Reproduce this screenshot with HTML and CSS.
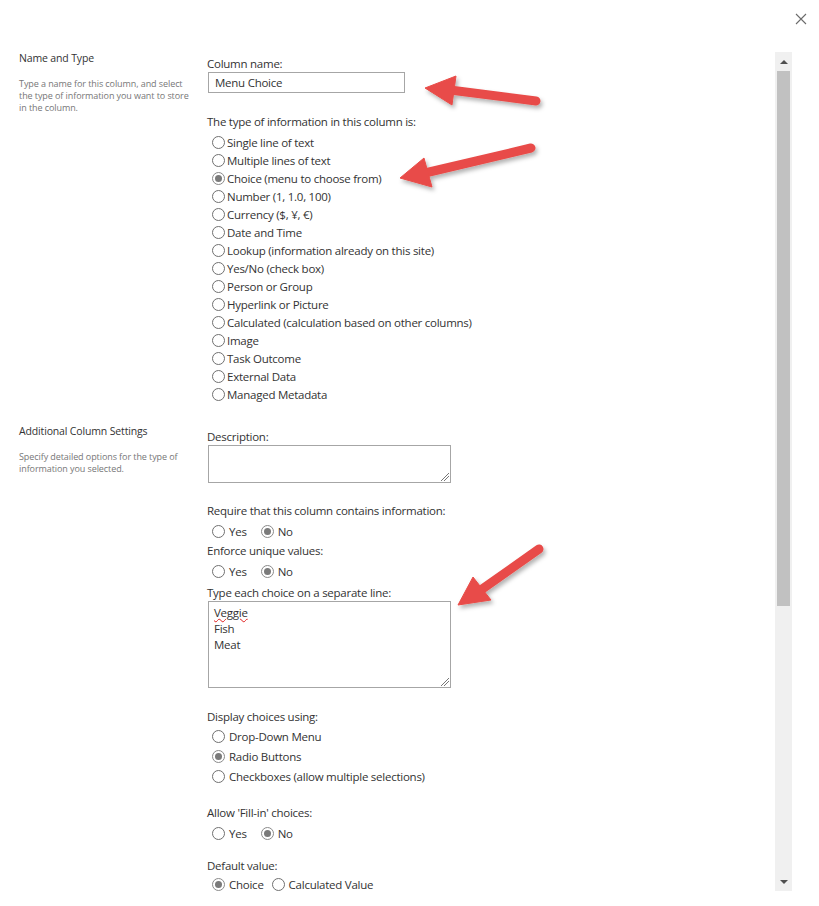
FILE: index.html
```html
<!DOCTYPE html>
<html>
<head>
<meta charset="utf-8">
<link rel="stylesheet" href="styles.css">
</head>
<body>
<div class="dialog">
  <div class="content">
    <section class="sect sect-name">
      <div class="side">
        <div class="side-title">Name and Type</div>
        <div class="side-desc">Type a name for this column, and select<br>the type of information you want to store<br>in the column.</div>
      </div>
      <div class="main">
        <div class="label">Column name:</div>
        <div class="textbox">Menu Choice</div>
        <div class="label label-type">The type of information in this column is:</div>
        <ul class="typelist">
          <li class="opt"><span class="radio"></span>Single line of text</li>
          <li class="opt"><span class="radio"></span>Multiple lines of text</li>
          <li class="opt"><span class="radio on"></span>Choice (menu to choose from)</li>
          <li class="opt"><span class="radio"></span>Number (1, 1.0, 100)</li>
          <li class="opt"><span class="radio"></span>Currency ($, ¥, €)</li>
          <li class="opt"><span class="radio"></span>Date and Time</li>
          <li class="opt"><span class="radio"></span>Lookup (information already on this site)</li>
          <li class="opt"><span class="radio"></span>Yes/No (check box)</li>
          <li class="opt"><span class="radio"></span>Person or Group</li>
          <li class="opt"><span class="radio"></span>Hyperlink or Picture</li>
          <li class="opt"><span class="radio"></span>Calculated (calculation based on other columns)</li>
          <li class="opt"><span class="radio"></span>Image</li>
          <li class="opt"><span class="radio"></span>Task Outcome</li>
          <li class="opt"><span class="radio"></span>External Data</li>
          <li class="opt"><span class="radio"></span>Managed Metadata</li>
        </ul>
      </div>
    </section>
    <section class="sect sect-extra">
      <div class="side">
        <div class="side-title">Additional Column Settings</div>
        <div class="side-desc">Specify detailed options for the type of<br>information you selected.</div>
      </div>
      <div class="main">
        <div class="label">Description:</div>
        <div class="textarea ta-desc"><span class="grip"></span></div>
        <div class="label label-req">Require that this column contains information:</div>
        <div class="pair"><span class="opt2"><span class="radio"></span>Yes</span><span class="opt2"><span class="radio on"></span>No</span></div>
        <div class="label label-uniq">Enforce unique values:</div>
        <div class="pair"><span class="opt2"><span class="radio"></span>Yes</span><span class="opt2"><span class="radio on"></span>No</span></div>
        <div class="label label-choices">Type each choice on a separate line:</div>
        <div class="textarea ta-choices">
          <div class="line"><span class="spell">Veggie</span></div>
          <div class="line">Fish</div>
          <div class="line">Meat</div>
          <span class="grip"></span>
        </div>
        <div class="label label-display">Display choices using:</div>
        <ul class="displist">
          <li class="opt2"><span class="radio"></span>Drop-Down Menu</li>
          <li class="opt2"><span class="radio on"></span>Radio Buttons</li>
          <li class="opt2"><span class="radio"></span>Checkboxes (allow multiple selections)</li>
        </ul>
        <div class="label label-fill">Allow 'Fill-in' choices:</div>
        <div class="pair"><span class="opt2"><span class="radio"></span>Yes</span><span class="opt2"><span class="radio on"></span>No</span></div>
        <div class="label label-default">Default value:</div>
        <div class="pair pair-tight"><span class="opt2"><span class="radio on"></span>Choice</span><span class="opt2"><span class="radio"></span>Calculated Value</span></div>
      </div>
    </section>
  </div>
  <div class="scrollbar">
    <div class="sb-btn"><span class="tri-up"></span></div>
    <div class="sb-thumb"></div>
    <div class="sb-track"></div>
    <div class="sb-btn"><span class="tri-down"></span></div>
  </div>
</div>

<svg class="close" width="12" height="12" viewBox="0 0 12 12"><path d="M1 1L11 11M11 1L1 11" stroke="#6b6b6b" stroke-width="1.1" fill="none"/></svg>

<svg class="annot" width="819" height="906" viewBox="0 0 819 906">
  <defs>
    <filter id="sh" x="-20%" y="-20%" width="140%" height="160%">
      <feDropShadow dx="2" dy="3" stdDeviation="2" flood-color="#000" flood-opacity="0.3"/>
    </filter>
  </defs>
  <g filter="url(#sh)" fill="#e84c48" stroke="#e84c48">
    <line x1="536" y1="101" x2="450" y2="90" stroke-width="9" stroke-linecap="round"/>
    <polygon points="425,88 456,76 452,105" stroke-width="1" stroke-linejoin="round"/>
    <line x1="531" y1="148" x2="425" y2="173" stroke-width="9" stroke-linecap="round"/>
    <polygon points="400,178 424,158 432,187" stroke-width="1" stroke-linejoin="round"/>
    <line x1="539" y1="549" x2="478" y2="592" stroke-width="9" stroke-linecap="round"/>
    <polygon points="458,605 473,577 491,600" stroke-width="1" stroke-linejoin="round"/>
  </g>
</svg>
</body>
</html>
```

FILE: styles.css
```css
html, body {
  margin: 0;
  padding: 0;
  background: #fff;
}
body {
  width: 819px;
  height: 906px;
  overflow: hidden;
  position: relative;
  font-family: "Open Sans", "Noto Sans", sans-serif;
  color: #333;
}
ul {
  list-style: none;
  margin: 0;
  padding: 0;
}
.dialog {
  display: flex;
  height: 906px;
}
.content {
  flex: 1;
  padding: 51px 0 0 19px;
}
.sect {
  display: flex;
}
.side {
  width: 188px;
  flex: none;
}
.side-title {
  font-size: 10.5px;
  letter-spacing: -0.15px;
  line-height: 14px;
  color: #333;
}
.side-desc {
  margin-top: 13px;
  font-size: 9px;
  letter-spacing: -0.08px;
  line-height: 12px;
  color: #777;
}
.main {
  padding-top: 5px;
  font-size: 11.5px;
  letter-spacing: -0.25px;
}
.label {
  line-height: 16px;
  color: #333;
}
.textbox {
  margin-left: 1px;
  width: 189px;
  height: 19px;
  border: 1px solid #a6a6a6;
  padding-left: 6px;
  line-height: 20px;
  color: #333;
}
.label-type {
  margin-top: 21px;
}
.typelist {
  margin-top: 3px;
}
.opt {
  display: flex;
  align-items: center;
  height: 18px;
  padding-left: 5px;
  color: #333;
}
.opt .radio {
  margin-right: 2px;
}
.radio {
  display: inline-block;
  box-sizing: border-box;
  width: 13px;
  height: 13px;
  border: 1px solid #707070;
  border-radius: 50%;
  background: #fff;
  flex: none;
  position: relative;
}
.radio.on {
  border-color: #8a8a8a;
}
.radio.on::after {
  content: "";
  position: absolute;
  left: 2px;
  top: 2px;
  width: 7px;
  height: 7px;
  border-radius: 50%;
  background: #7a7a7a;
}
.sect-extra {
  margin-top: 21px;
}
.sect-extra .main {
  padding-top: 5px;
}
.textarea {
  position: relative;
  box-sizing: border-box;
  margin-left: 1px;
  width: 243px;
  border: 1px solid #a6a6a6;
  background: #fff;
}
.ta-desc {
  height: 38px;
}
.ta-choices {
  height: 87px;
  padding: 3px 0 0 5px;
}
.line {
  line-height: 16px;
}
.spell {
  text-decoration: underline wavy #e02020;
  text-decoration-thickness: 1px;
  text-underline-offset: 1px;
}
.grip {
  position: absolute;
  right: 1px;
  bottom: 1px;
  width: 8px;
  height: 8px;
  background: linear-gradient(135deg, transparent 0 45%, #777 45% 52%, transparent 52% 68%, #777 68% 75%, transparent 75%);
}
.label-req {
  margin-top: 20px;
}
.pair {
  display: flex;
  height: 20px;
  align-items: center;
  padding-left: 5px;
  margin-top: 2px;
}
.opt2 {
  display: flex;
  align-items: center;
  height: 20px;
  color: #333;
}
.opt2 .radio {
  margin-right: 4px;
}
.pair .opt2 + .opt2 {
  margin-left: 14px;
}
.pair-tight .opt2 + .opt2 {
  margin-left: 8px;
}
.label-uniq {
  margin-top: 2px;
}
.label-choices {
  margin-top: 4px;
}
.label-display {
  margin-top: 21px;
}
.displist {
  padding-left: 5px;
  margin-top: 1px;
}
.label-fill {
  margin-top: 19px;
}
.label-default {
  margin-top: 15px;
}
.pair-tight {
  margin-top: 0;
}
.scrollbar {
  flex: none;
  width: 17px;
  margin: 52px 27px 0 0;
  height: 839px;
  display: flex;
  flex-direction: column;
  background: #f0f0f0;
}
.sb-btn {
  height: 19px;
  display: flex;
  align-items: center;
  justify-content: center;
  flex: none;
}
.sb-thumb {
  height: 535px;
  margin: 0 2px;
  background: #c1c1c1;
  flex: none;
}
.sb-track {
  flex: 1;
}
.tri-up, .tri-down {
  width: 0;
  height: 0;
  border-left: 4px solid transparent;
  border-right: 4px solid transparent;
}
.tri-up {
  border-bottom: 4px solid #505050;
}
.tri-down {
  border-top: 4px solid #505050;
}
.close {
  position: absolute;
  left: 795px;
  top: 13px;
}
.annot {
  position: absolute;
  left: 0;
  top: 0;
  pointer-events: none;
}
```
